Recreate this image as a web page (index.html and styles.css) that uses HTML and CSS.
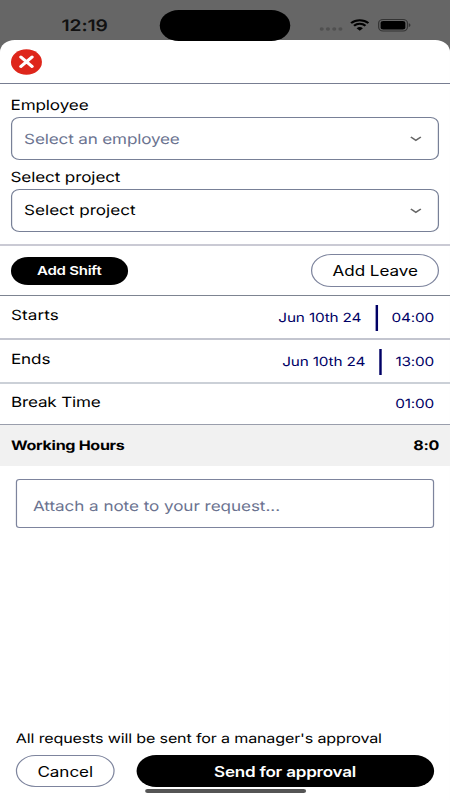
FILE: index.html
```html
<!DOCTYPE html>
<html lang="en">
<head>
<meta charset="utf-8">
<meta name="viewport" content="width=device-width, initial-scale=1">
<title>Add shift request</title>
<link rel="stylesheet" href="styles.css">
</head>
<body>
<div class="screen">
  <header class="status">
    <span class="clock">12:19</span>
    <span class="island"></span>
    <span class="indicators">
      <svg class="dots" width="19" height="4" viewBox="0 0 19 4"><circle cx="1.8" cy="2" r="1.7"/><circle cx="6.9" cy="2" r="1.7"/><circle cx="12.1" cy="2" r="1.7"/><circle cx="17.2" cy="2" r="1.7"/></svg>
      <svg class="wifi" width="16" height="12" viewBox="0 0 16 12"><path d="M.9 4.1a10.2 10.2 0 0 1 14.2 0M3.3 6.7a6.8 6.8 0 0 1 9.4 0"/><path class="fill" d="M5.4 9.2a3.8 3.8 0 0 1 5.2 0L8 11.8z"/></svg>
      <svg class="battery" width="27" height="13" viewBox="0 0 27 13"><rect class="shell" x=".5" y=".5" width="23.6" height="11.4" rx="3.6"/><rect x="2.1" y="2" width="20.3" height="8.4" rx="2.2"/><path class="tip" d="M25.2 4.3c1.8.7 1.8 3.1 0 3.8z"/></svg>
    </span>
  </header>
  <main class="sheet">
    <div class="sheet-top">
      <button class="close" aria-label="Close"><svg width="26" height="26" viewBox="0 0 26 26"><circle cx="12.7" cy="13" r="12.7"/><path d="M8.1 8.1l9.2 9.4M17.3 8.1l-9.2 9.4"/></svg></button>
    </div>
    <section class="fields">
      <div class="label">Employee</div>
      <div class="select placeholder"><span>Select an employee</span><svg class="chevron" width="10" height="6" viewBox="0 0 10 6"><path d="M.9 1L5 4.4 9.1 1"/></svg></div>
      <div class="label second">Select project</div>
      <div class="select"><span>Select project</span><svg class="chevron" width="10" height="6" viewBox="0 0 10 6"><path d="M.9 1L5 4.4 9.1 1"/></svg></div>
    </section>
    <div class="tabs">
      <button class="shift">Add Shift</button>
      <button class="leave">Add Leave</button>
    </div>
    <div class="row starts"><span>Starts</span><span class="value"><span>Jun 10th 24</span><i class="bar"></i><span>04:00</span></span></div>
    <div class="row ends"><span>Ends</span><span class="value"><span>Jun 10th 24</span><i class="bar"></i><span>13:00</span></span></div>
    <div class="row break"><span>Break Time</span><span class="value"><span>01:00</span></span></div>
    <div class="row total"><span>Working Hours</span><span>8:0</span></div>
    <div class="note">Attach a note to your request...</div>
    <footer class="footer">
      <p>All requests will be sent for a manager's approval</p>
      <div class="actions"><button class="cancel">Cancel</button><button class="send">Send for approval</button></div>
      <div class="home"></div>
    </footer>
  </main>
</div>
</body>
</html>
```
FILE: styles.css
```css
* { box-sizing: border-box; }
html, body { margin: 0; height: 800px; overflow: hidden; background: #666; }
body { font-family: Inter, "Liberation Sans", sans-serif; color: #000; text-rendering: geometricPrecision; }
button { font: inherit; letter-spacing: inherit; margin: 0; padding: 0; cursor: pointer; white-space: nowrap; }
svg { display: block; }

/* The phone canvas is wider than its native proportions. */
.screen {
  width: 369px; height: 800px;
  display: flex; flex-direction: column;
  transform: scaleX(1.2195); transform-origin: 0 0;
  background: #666;
  font-size: 14px; letter-spacing: 0;
}

.status { height: 40px; flex: none; display: flex; position: relative; z-index: 1; }
.clock { width: 130.8px; padding: 16px 0 0 50.5px; font-size: 15.8px; line-height: 20px; font-weight: 600; letter-spacing: -.1px; color: #111; }
.island { width: 107.4px; height: 31.5px; margin-top: 9.8px; border-radius: 16px; background: #000; }
.indicators { display: flex; margin-left: 23.5px; }
.dots { margin-top: 27px; fill: #505050; }
.wifi { margin: 18.5px 0 0 6.5px; fill: none; stroke: #000; stroke-width: 1.9; }
.wifi .fill { fill: #000; stroke: none; }
.battery { margin: 18.6px 0 0 6.5px; }
.battery .shell { fill: none; stroke: #333; stroke-width: 1; }
.battery .tip { fill: #333; }

.sheet { flex: 1; display: flex; flex-direction: column; background: #fff; border-radius: 12px 12px 0 0; }
.sheet-top { height: 44px; flex: none; padding: 8.5px 0 0 8.5px; border-bottom: 1px solid #777d91; }
.close { display: block; border: 0; background: none; width: 26px; height: 26px; }
.close circle { fill: #de261b; }
.close path { fill: none; stroke: #fff; stroke-width: 2.8; stroke-linecap: round; }

.fields { height: 162px; flex: none; padding: 11px 8.6px 0; border-bottom: 2px solid #cacad4; }
.label { height: 22px; line-height: 22px; letter-spacing: -.09px; }
.label.second { height: 29px; padding-top: 7px; }
.select { height: 43px; display: flex; align-items: center; justify-content: space-between; padding: 0 13px 0 10.2px; border: 1px solid #788097; border-radius: 7px; }
.placeholder { padding-top: 1px; color: #6b7390; letter-spacing: -.12px; }
.chevron { fill: none; stroke: #666; stroke-width: 1.4; }

.tabs { height: 50px; flex: none; padding: 0 8.6px; border-bottom: 1px solid #7d8491; display: flex; align-items: center; justify-content: space-between; }
.shift { width: 96.4px; height: 28px; border: 0; border-radius: 14px; background: #000; color: #fff; font-size: 12.3px; font-weight: 600; letter-spacing: -.2px; }
.leave { width: 105.5px; height: 33px; border: 1px solid #7d849d; border-radius: 17px; background: #fff; color: #000; letter-spacing: -.05px; }

.row { flex: none; display: flex; justify-content: space-between; padding: 0 9px; line-height: 22px; }
.starts { height: 44px; padding-top: 9px; border-bottom: 2px solid #c3c5cf; letter-spacing: .08px; }
.ends { height: 44px; padding-top: 9px; border-bottom: 2px solid #cbd0d7; letter-spacing: -.1px; }
.break { height: 41px; padding-top: 8px; border-bottom: 1px solid #9a9eac; letter-spacing: -.14px; }
.value { display: flex; height: 26px; align-items: center; padding-right: 4px; font-size: 12.6px; letter-spacing: -.14px; color: #000065; }
.starts .value span, .ends .value span { padding-top: 1px; }
.bar { width: 1.8px; height: 26px; margin: 0 11.5px; background: #000065; }
.total { height: 41px; align-items: center; background: #f1f1f1; font-size: 13.2px; font-weight: 700; letter-spacing: -.26px; }

.note { height: 49px; flex: none; margin: 13px 13px 0; padding: 5px 13px 0; display: flex; align-items: center; border: 1px solid #7d849d; border-radius: 3px; color: #6b7390; letter-spacing: -.04px; }
.footer { margin-top: auto; height: 72px; padding: 0 13px; }
.footer p { margin: 0; height: 27px; line-height: 22px; font-size: 13.2px; letter-spacing: -.13px; white-space: nowrap; }
.actions { display: flex; justify-content: space-between; }
.cancel { width: 81px; height: 32px; border: 1px solid #7d849d; border-radius: 16px; background: #fff; color: #000; letter-spacing: -.06px; }
.send { width: 244.5px; height: 32px; border: 0; border-radius: 16px; background: #000; color: #fff; font-weight: 600; letter-spacing: -.2px; }
.home { width: 132px; height: 4px; margin: 2px auto 0; border-radius: 2px; background: #555; }
```
